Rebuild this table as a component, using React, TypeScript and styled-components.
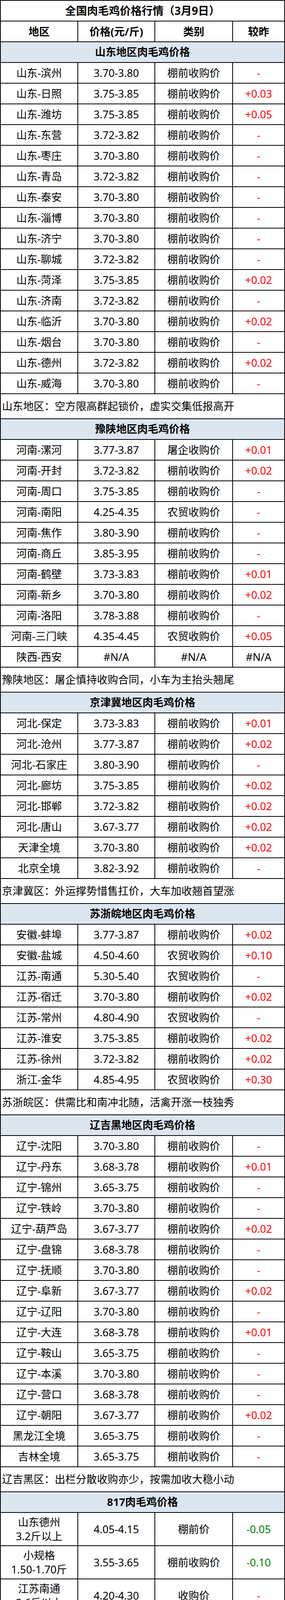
import React from 'react';
import styled, { createGlobalStyle } from 'styled-components';

const GlobalStyle = createGlobalStyle`
  html, body {
    margin: 0;
    padding: 0;
    background: #ffffff;
  }
  body {
    font-family: "Noto Sans", "Noto Sans CJK SC", sans-serif;
    color: #000000;
    line-height: 1.2;
  }
`;

const Sheet = styled.div`
  width: 729px;
  box-sizing: border-box;
  background: #000000;
  padding: 2px;
  display: flex;
  flex-direction: column;
  gap: 2px;
`;

const TitleBar = styled.div`
  flex: none;
  height: 51px;
  background: #ffffff;
  display: flex;
  align-items: center;
  justify-content: center;
  font-size: 28px;
  font-weight: 700;
  white-space: nowrap;
`;

const SectionBar = styled.div`
  flex: none;
  height: 51px;
  background: #dce6f1;
  display: flex;
  align-items: center;
  justify-content: center;
  font-size: 27px;
  font-weight: 700;
  white-space: nowrap;
`;

const NoteBar = styled.div<{ $last?: boolean }>`
  flex: none;
  box-sizing: border-box;
  height: ${(p) => (p.$last ? '61px' : '62px')};
  background: #ffffff;
  display: flex;
  align-items: center;
  padding-left: 3px;
  font-size: 27px;
  white-space: nowrap;
`;

const Row = styled.div<{ $tall?: boolean }>`
  flex: none;
  height: ${(p) => (p.$tall ? '83px' : '51px')};
  display: grid;
  grid-template-columns: 196px 195px 197px 131px;
  gap: 2px;
`;

type Tone = 'plain' | 'up' | 'down';

const Cell = styled.div<{ $tone?: Tone; $bold?: boolean }>`
  background: #ffffff;
  display: flex;
  flex-direction: column;
  align-items: center;
  justify-content: center;
  text-align: center;
  font-size: 27px;
  line-height: 36px;
  font-weight: ${(p) => (p.$bold ? 700 : 400)};
  white-space: nowrap;
  color: ${(p) => (p.$tone === 'up' ? '#ff0000' : p.$tone === 'down' ? '#008000' : '#000000')};
`;

type RowData = [string, string, string, string];

interface Section {
  title: string;
  rows: RowData[];
  note: string;
  tall?: boolean;
}

const P = '棚前收购价';
const N = '农贸收购价';

const sections: Section[] = [
  {
    title: '山东地区肉毛鸡价格',
    rows: [
      ['山东-滨州', '3.70-3.80', P, '-'],
      ['山东-日照', '3.75-3.85', P, '+0.03'],
      ['山东-潍坊', '3.75-3.85', P, '+0.05'],
      ['山东-东营', '3.72-3.82', P, '-'],
      ['山东-枣庄', '3.70-3.80', P, '-'],
      ['山东-青岛', '3.72-3.82', P, '-'],
      ['山东-泰安', '3.70-3.80', P, '-'],
      ['山东-淄博', '3.70-3.80', P, '-'],
      ['山东-济宁', '3.70-3.80', P, '-'],
      ['山东-聊城', '3.72-3.82', P, '-'],
      ['山东-菏泽', '3.75-3.85', P, '+0.02'],
      ['山东-济南', '3.72-3.82', P, '-'],
      ['山东-临沂', '3.70-3.80', P, '+0.02'],
      ['山东-烟台', '3.70-3.80', P, '-'],
      ['山东-德州', '3.72-3.82', P, '+0.02'],
      ['山东-威海', '3.70-3.80', P, '-'],
    ],
    note: '山东地区：空方限高群起锁价，虚实交集低报高开',
  },
  {
    title: '豫陕地区肉毛鸡价格',
    rows: [
      ['河南-漯河', '3.77-3.87', '屠企收购价', '+0.01'],
      ['河南-开封', '3.72-3.82', P, '+0.02'],
      ['河南-周口', '3.75-3.85', P, '-'],
      ['河南-南阳', '4.25-4.35', N, '-'],
      ['河南-焦作', '3.80-3.90', P, '-'],
      ['河南-商丘', '3.85-3.95', P, '-'],
      ['河南-鹤壁', '3.73-3.83', P, '+0.01'],
      ['河南-新乡', '3.70-3.80', P, '+0.02'],
      ['河南-洛阳', '3.78-3.88', P, '-'],
      ['河南-三门峡', '4.35-4.45', N, '+0.05'],
      ['陕西-西安', '#N/A', '#N/A', '#N/A'],
    ],
    note: '豫陕地区：屠企慎持收购合同，小车为主抬头翘尾',
  },
  {
    title: '京津冀地区肉毛鸡价格',
    rows: [
      ['河北-保定', '3.73-3.83', P, '+0.01'],
      ['河北-沧州', '3.77-3.87', P, '+0.02'],
      ['河北-石家庄', '3.80-3.90', P, '-'],
      ['河北-廊坊', '3.75-3.85', P, '+0.02'],
      ['河北-邯郸', '3.72-3.82', P, '+0.02'],
      ['河北-唐山', '3.67-3.77', P, '+0.02'],
      ['天津全境', '3.70-3.80', P, '+0.02'],
      ['北京全境', '3.82-3.92', P, '-'],
    ],
    note: '京津冀区：外运撑势惜售扛价，大车加收翘首望涨',
  },
  {
    title: '苏浙皖地区肉毛鸡价格',
    rows: [
      ['安徽-蚌埠', '3.77-3.87', P, '+0.02'],
      ['安徽-盐城', '4.50-4.60', N, '+0.10'],
      ['江苏-南通', '5.30-5.40', N, '-'],
      ['江苏-宿迁', '3.70-3.80', P, '+0.02'],
      ['江苏-常州', '4.80-4.90', N, '-'],
      ['江苏-淮安', '3.75-3.85', P, '+0.02'],
      ['江苏-徐州', '3.72-3.82', P, '+0.02'],
      ['浙江-金华', '4.85-4.95', N, '+0.30'],
    ],
    note: '苏浙皖区：供需比和南冲北随，活禽开涨一枝独秀',
  },
  {
    title: '辽吉黑地区肉毛鸡价格',
    rows: [
      ['辽宁-沈阳', '3.70-3.80', P, '-'],
      ['辽宁-丹东', '3.68-3.78', P, '+0.01'],
      ['辽宁-锦州', '3.65-3.75', P, '-'],
      ['辽宁-铁岭', '3.70-3.80', P, '-'],
      ['辽宁-葫芦岛', '3.67-3.77', P, '+0.02'],
      ['辽宁-盘锦', '3.68-3.78', P, '-'],
      ['辽宁-抚顺', '3.70-3.80', P, '-'],
      ['辽宁-阜新', '3.67-3.77', P, '+0.02'],
      ['辽宁-辽阳', '3.70-3.80', P, '-'],
      ['辽宁-大连', '3.68-3.78', P, '+0.01'],
      ['辽宁-鞍山', '3.65-3.75', P, '-'],
      ['辽宁-本溪', '3.70-3.80', P, '-'],
      ['辽宁-营口', '3.68-3.78', P, '-'],
      ['辽宁-朝阳', '3.67-3.77', P, '+0.02'],
      ['黑龙江全境', '3.65-3.75', P, '-'],
      ['吉林全境', '3.65-3.75', P, '-'],
    ],
    note: '辽吉黑区：出栏分散收购亦少，按需加收大稳小动',
  },
  {
    title: '817肉毛鸡价格',
    tall: true,
    rows: [
      ['山东德州\n3.2斤以上', '4.05-4.15', '棚前价', '-0.05'],
      ['小规格\n1.50-1.70斤', '3.55-3.65', P, '-0.10'],
      ['江苏南通\n3.6斤以上', '4.20-4.30', '收购价', '-'],
      ['山东聊城\n2.8-3.2斤', '4.00-4.10', P, '-0.05'],
      ['浙江金华\n3.6斤以上', '4.85-4.95', N, '+0.30'],
      ['河南濮阳\n3.2-3.5斤', '4.20-4.30', P, '-'],
      ['河南新乡\n3.2-3.5斤', '4.15-4.25', P, '-'],
      ['河南开封\n3.2-3.5斤', '4.25-4.35', P, '-'],
      ['津冀地区\n2.8-3.2斤', '#N/A', '#N/A', '#N/A'],
    ],
    note: '肉杂817鸡市场棚前行情：供需对峙，高举高打',
  },
];

const toneOf = (v: string): Tone => {
  if (v === '#N/A') return 'plain';
  if (v === '-' || v.startsWith('+')) return 'up';
  return 'down';
};

const Lines: React.FC<{ text: string }> = ({ text }) => (
  <>
    {text.split('\n').map((t, i) => (
      <span key={i}>{t}</span>
    ))}
  </>
);

export default function App() {
  return (
    <>
      <GlobalStyle />
      <Sheet>
        <TitleBar>全国肉毛鸡价格行情（3月9日）</TitleBar>
        <Row>
          <Cell $bold>地区</Cell>
          <Cell $bold>价格(元/斤)</Cell>
          <Cell $bold>类别</Cell>
          <Cell $bold>较昨</Cell>
        </Row>
        {sections.map((s, si) => (
          <React.Fragment key={s.title}>
            <SectionBar>{s.title}</SectionBar>
            {s.rows.map((r, i) => (
              <Row key={i} $tall={s.tall}>
                <Cell>
                  <Lines text={r[0]} />
                </Cell>
                <Cell>{r[1]}</Cell>
                <Cell>{r[2]}</Cell>
                <Cell $tone={toneOf(r[3])}>{r[3]}</Cell>
              </Row>
            ))}
            <NoteBar $last={si === sections.length - 1}>{s.note}</NoteBar>
          </React.Fragment>
        ))}
      </Sheet>
    </>
  );
}
